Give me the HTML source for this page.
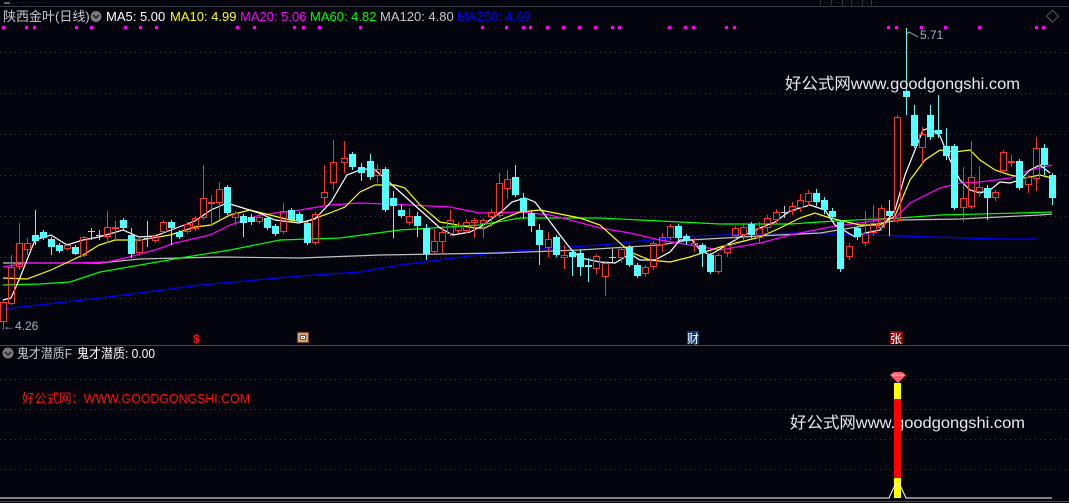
<!DOCTYPE html>
<html><head><meta charset="utf-8"><style>
html,body{margin:0;padding:0;background:#04040c;width:1069px;height:503px;overflow:hidden}
svg{display:block}
text{font-family:"Liberation Sans","Noto Sans CJK SC",sans-serif}
</style></head><body>
<svg id="s" width="1069" height="503" xmlns="http://www.w3.org/2000/svg">
<rect width="1069" height="503" fill="#04040c"/>
<line x1="0" y1="6.5" x2="1069" y2="6.5" stroke="#3a3a44"/>
<g fill="#6a6a72" font-size="6"><text x="4" y="4">▬  · ·  · ··  · ··  · · ··</text><text x="820" y="4">|  ···  |  ···  |  ··  |  ···  |  ··  |  ···</text></g>
<g id="grid" stroke="#3a3a40" stroke-dasharray="1,4"></g>
<text x="3" y="21" font-size="13" fill="#c8c8d0">陕西金叶(日线)</text>
<circle cx="96" cy="16.5" r="5.5" fill="#7a7a7a"/><path d="M93 15l3 3 3-3" stroke="#222" stroke-width="1.5" fill="none"/>
<text x="106" y="21" font-size="13" fill="#ffffff">MA5: 5.00</text>
<text x="170" y="21" font-size="13" fill="#ffff00">MA10: 4.99</text>
<text x="240" y="21" font-size="13" fill="#ff00ff">MA20: 5.06</text>
<text x="310" y="21" font-size="13" fill="#00ff00">MA60: 4.82</text>
<text x="380" y="21" font-size="13" fill="#c8c8c8">MA120: 4.80</text>
<text x="457" y="21" font-size="13" fill="#0000ff">MA250: 4.69</text>
<text x="1046" y="21" font-size="13" fill="#aaa">◇</text>
<g id="dots" fill="#ff00ff"></g>
<g id="lines" fill="none" stroke-width="1.2"></g>
<g id="candles"></g>
<text x="3" y="330" font-size="12" fill="#9fb0c8">←4.26</text>
<path d="M907 34 L909 32 L918 37" stroke="#aaa" fill="none"/>
<text x="920" y="39" font-size="12" fill="#9fb0c8">5.71</text>
<text x="785" y="89" font-size="16" fill="#e8e8f0" textLength="235" lengthAdjust="spacingAndGlyphs">好公式网www.goodgongshi.com</text>
<text x="193" y="343" font-size="12" fill="#ff1010" font-weight="bold">$</text>
<rect x="297" y="332" width="12" height="11" fill="#8a4a10"/><rect x="299" y="334" width="8" height="7" fill="none" stroke="#fff"/><rect x="301.5" y="336.5" width="3" height="2" fill="none" stroke="#fff"/>
<rect x="687" y="331" width="12" height="13" fill="#103a70"/><text x="687" y="343" font-size="12" fill="#fff">财</text>
<rect x="890" y="331" width="13" height="13" fill="#8a0808"/><text x="890" y="343" font-size="12" fill="#fff">张</text>
<line x1="0" y1="345.5" x2="1069" y2="345.5" stroke="#48484e"/>
<circle cx="8" cy="353" r="5.5" fill="#7a7a7a"/><path d="M5 352l3 3 3-3" stroke="#222" stroke-width="1.5" fill="none"/>
<text x="17" y="358" font-size="13" fill="#c8c8d0" textLength="55" lengthAdjust="spacingAndGlyphs">鬼才潜质F</text>
<text x="77" y="358" font-size="13" fill="#ffffff" textLength="78" lengthAdjust="spacingAndGlyphs">鬼才潜质: 0.00</text>
<text x="22" y="403" font-size="13" fill="#ff1010" textLength="228" lengthAdjust="spacingAndGlyphs">好公式网：WWW.GOODGONGSHI.COM</text>
<text x="790" y="428" font-size="16" fill="#e8e8f0" textLength="235" lengthAdjust="spacingAndGlyphs">好公式网www.goodgongshi.com</text>
<rect x="894" y="383" width="7" height="16" fill="#ffff00"/>
<rect x="894" y="399" width="7" height="79" fill="#ff0000"/>
<rect x="894" y="478" width="7" height="20" fill="#ffff00"/>
<path d="M890 375 L894 372 L902 372 L906 375 L898 383 Z" fill="#ff6070"/>
<path d="M892 375 L904 375" stroke="#ffb0b8"/>
<polyline points="0,498 889,498 895,485 900,485 906,498 1052,498" stroke="#ffffff" fill="none"/>
<line x1="0" y1="501.5" x2="1069" y2="501.5" stroke="#48484e"/>
</svg>
<script>
var NS="http://www.w3.org/2000/svg";
function el(p,t,a){var e=document.createElementNS(NS,t);for(var k in a)e.setAttribute(k,a[k]);p.appendChild(e);return e;}
var g=document.getElementById('grid');
[52,93,134,175,216,257,298,379,409,439,469].forEach(function(y){el(g,'line',{x1:0,x2:1069,y1:y+.5,y2:y+.5});});
var d=document.getElementById('dots');
[3,26,34,76,91,125,140,156,237,254,294,303,319,360,482,506,523,530,547,563,579,595,612,619,669,685,693,726,734,888,896,921,945,979,1036,1043].forEach(function(x){el(d,'rect',{x:x-1,y:26,width:3,height:3});});
var L=document.getElementById('lines');
var lines=[
['#0000ff',[[3,309],[100,298],[200,285],[300,276],[360,272],[400,265],[500,252],[600,245],[690,236],[800,233],[900,236],[1000,239],[1037,239]]],
['#c0c0c0',[[3,263],[100,263],[140,259],[220,257],[300,258],[380,255],[500,253],[580,250],[660,245],[690,240],[760,236],[820,233],[900,220],[960,219],[1040,215],[1052,214]]],
['#00ff00',[[3,285],[40,284],[70,282],[100,272],[140,265],[180,258],[230,250],[280,240],[340,238],[400,230],[480,225],[520,218],[600,218],[680,222],[720,224],[790,224],[835,221],[900,218],[940,215],[1020,213],[1052,212]]],
['#ff00ff',[[3,267],[27,263],[75,263],[107,262],[125,258],[155,250],[175,243],[210,235],[230,225],[260,215],[300,210],[330,205],[360,203],[410,205],[450,207],[480,213],[520,212],[550,215],[570,220],[600,228],[630,233],[660,240],[690,245],[720,250],[760,243],[790,235],[830,227],[880,220],[895,218],[910,203],[940,188],[960,183],[980,182],[1010,178],[1030,170],[1052,165]]],
['#ffff00',[[3,278],[27,279],[51,270],[83,255],[99,245],[115,240],[140,240],[170,235],[195,227],[211,225],[230,215],[250,210],[270,215],[290,220],[305,222],[330,213],[345,207],[360,192],[375,185],[395,185],[405,188],[420,205],[440,222],[475,228],[485,228],[500,220],[520,212],[540,210],[560,214],[580,218],[600,225],[620,243],[630,252],[650,260],[670,262],[690,257],[720,247],[760,237],[780,228],[800,218],[815,213],[830,218],[860,225],[880,225],[895,216],[910,180],[925,160],[940,150],[955,152],[970,150],[980,160],[995,170],[1010,175],[1025,178],[1040,175],[1052,178]]],
['#ffffff',[[3,300],[11,298],[19,280],[35,240],[51,235],[67,245],[83,240],[99,237],[123,230],[139,237],[155,236],[171,230],[195,221],[211,210],[227,203],[243,208],[259,213],[275,220],[299,223],[315,219],[331,202],[347,175],[360,170],[373,168],[390,183],[420,210],[440,228],[453,235],[470,232],[480,227],[500,213],[512,202],[525,198],[535,202],[545,215],[560,235],[570,248],[580,258],[600,262],[615,263],[630,254],[640,260],[655,260],[670,252],[680,240],[692,240],[700,250],[710,255],[720,249],[740,237],[760,228],[775,222],[790,211],[810,205],[825,210],[835,225],[855,237],[865,233],[880,230],[895,210],[905,175],[915,150],[923,130],[930,128],[940,136],[950,160],[960,180],[970,190],[980,193],[990,190],[1000,182],[1010,183],[1020,180],[1030,170],[1040,165],[1050,173]]]
];
lines.forEach(function(l){el(L,'polyline',{stroke:l[0],points:l[1].map(function(p){return p.join(',')}).join(' ')});});
var C=[
[3,302,322,300,330,'r'],[11,267,304,255,305,'r'],[19,243,267,223,270,'r'],[27,243,250,238,255,'r'],[35,235,241,210,245,'c'],[43,232,238,230,240,'c'],[51,239,247,237,255,'c'],[59,245,251,243,253,'c'],[67,245,249,243,251,'r'],[75,247,254,245,255,'c'],[83,237,256,236,257,'r'],[91,231,231,228,240,'g'],[99,235,235,230,240,'g'],[107,227,237,211,243,'r'],[115,227,229,221,240,'r'],[123,220,228,218,230,'c'],[131,235,254,228,258,'c'],[139,239,253,238,254,'r'],[147,238,238,221,247,'g'],[155,236,241,234,243,'r'],[163,222,232,220,234,'r'],[171,222,228,220,245,'c'],[179,232,237,230,239,'c'],[187,224,232,222,234,'r'],[195,218,229,216,231,'r'],[203,198,218,165,220,'r'],[211,202,204,195,225,'r'],[219,189,203,182,220,'r'],[227,187,213,185,215,'c'],[235,213,218,211,225,'r'],[243,216,223,214,237,'c'],[251,217,222,214,225,'c'],[259,217,222,215,224,'r'],[267,218,228,216,230,'c'],[275,226,234,224,236,'c'],[283,211,232,203,234,'r'],[291,210,220,208,222,'c'],[299,214,221,212,223,'c'],[307,223,243,221,245,'c'],[315,214,243,212,245,'r'],[324,192,198,165,205,'r'],[333,162,183,140,190,'r'],[344,158,163,141,173,'r'],[352,154,167,152,170,'c'],[361,167,173,163,181,'c'],[370,161,177,154,180,'c'],[377,169,176,164,183,'r'],[385,169,210,167,212,'c'],[393,198,206,191,238,'c'],[401,210,216,204,218,'c'],[409,216,223,208,225,'r'],[417,216,226,212,237,'c'],[426,228,254,224,260,'c'],[434,241,252,229,254,'r'],[442,232,242,227,253,'r'],[450,220,234,210,236,'r'],[458,225,231,222,233,'r'],[466,222,231,219,233,'r'],[474,220,223,218,238,'r'],[483,220,224,218,238,'r'],[491,212,217,209,227,'r'],[499,183,216,173,218,'r'],[507,179,189,170,199,'r'],[515,177,195,165,197,'c'],[523,198,212,193,219,'c'],[531,213,226,211,232,'c'],[539,230,245,224,265,'c'],[548,239,248,232,257,'r'],[556,237,255,235,257,'c'],[564,255,258,245,269,'r'],[572,252,257,250,276,'c'],[580,253,267,249,276,'c'],[588,265,267,258,282,'c'],[596,256,269,254,274,'r'],[605,263,277,261,296,'r'],[612,257,258,249,263,'g'],[621,249,258,247,263,'r'],[629,247,265,245,267,'c'],[637,265,276,263,278,'c'],[645,267,274,265,277,'r'],[653,243,267,241,270,'r'],[662,237,245,233,252,'r'],[670,226,238,224,240,'r'],[678,226,238,224,241,'c'],[686,236,241,234,245,'c'],[694,243,246,238,252,'r'],[702,245,253,243,267,'c'],[710,255,272,253,274,'c'],[718,255,272,253,274,'r'],[727,245,253,243,257,'r'],[735,228,236,226,245,'r'],[743,227,235,223,240,'r'],[751,224,235,222,238,'c'],[759,228,238,222,243,'r'],[767,218,228,215,232,'r'],[776,212,220,209,224,'r'],[784,212,212,206,218,'g'],[792,206,211,202,215,'r'],[800,200,208,194,212,'r'],[808,193,202,190,206,'r'],[816,193,202,189,206,'c'],[824,200,210,197,214,'c'],[832,211,217,208,219,'c'],[840,222,269,220,272,'c'],[849,246,257,243,260,'r'],[857,228,237,226,240,'c'],[865,233,243,211,246,'r'],[873,223,233,205,236,'r'],[881,208,228,205,231,'r'],[889,211,216,200,236,'c'],[897,117,221,115,223,'r'],[906,91,97,28,115,'c'],[914,115,146,105,148,'c'],[922,134,148,127,164,'r'],[930,115,137,105,140,'c'],[938,130,134,95,138,'c'],[946,146,156,128,160,'c'],[954,146,208,144,210,'c'],[963,198,208,167,222,'r'],[971,177,207,141,209,'r'],[979,187,192,166,197,'r'],[987,188,198,185,220,'c'],[995,192,198,190,201,'r'],[1003,152,171,150,173,'r'],[1011,161,163,155,167,'r'],[1019,161,188,159,190,'c'],[1028,177,185,175,193,'r'],[1036,148,179,137,191,'r'],[1044,148,165,144,175,'c'],[1052,175,198,173,205,'c']
];
var G=document.getElementById('candles');
C.forEach(function(c){var x=c[0],col=c[5]=='r'?'#ff3030':c[5]=='c'?'#54ffff':'#c8c8c8';
 if(c[5]=='r'){
  el(G,'line',{x1:x+.5,x2:x+.5,y1:c[3],y2:c[1],stroke:col});
  el(G,'line',{x1:x+.5,x2:x+.5,y1:c[2],y2:c[4],stroke:col});
  el(G,'rect',{x:x-2.5,y:c[1]+.5,width:6,height:Math.max(1,c[2]-c[1]-1),fill:'none',stroke:col});
 }else if(c[5]=='c'){
  el(G,'line',{x1:x+.5,x2:x+.5,y1:c[3],y2:c[4],stroke:col});
  el(G,'rect',{x:x-3,y:c[1],width:7,height:Math.max(1,c[2]-c[1]),fill:col});
 }else{
  el(G,'line',{x1:x+.5,x2:x+.5,y1:c[3],y2:c[4],stroke:col});
  el(G,'line',{x1:x-3,x2:x+4,y1:c[1]+.5,y2:c[1]+.5,stroke:col});
 }
});
</script>
</body></html>
